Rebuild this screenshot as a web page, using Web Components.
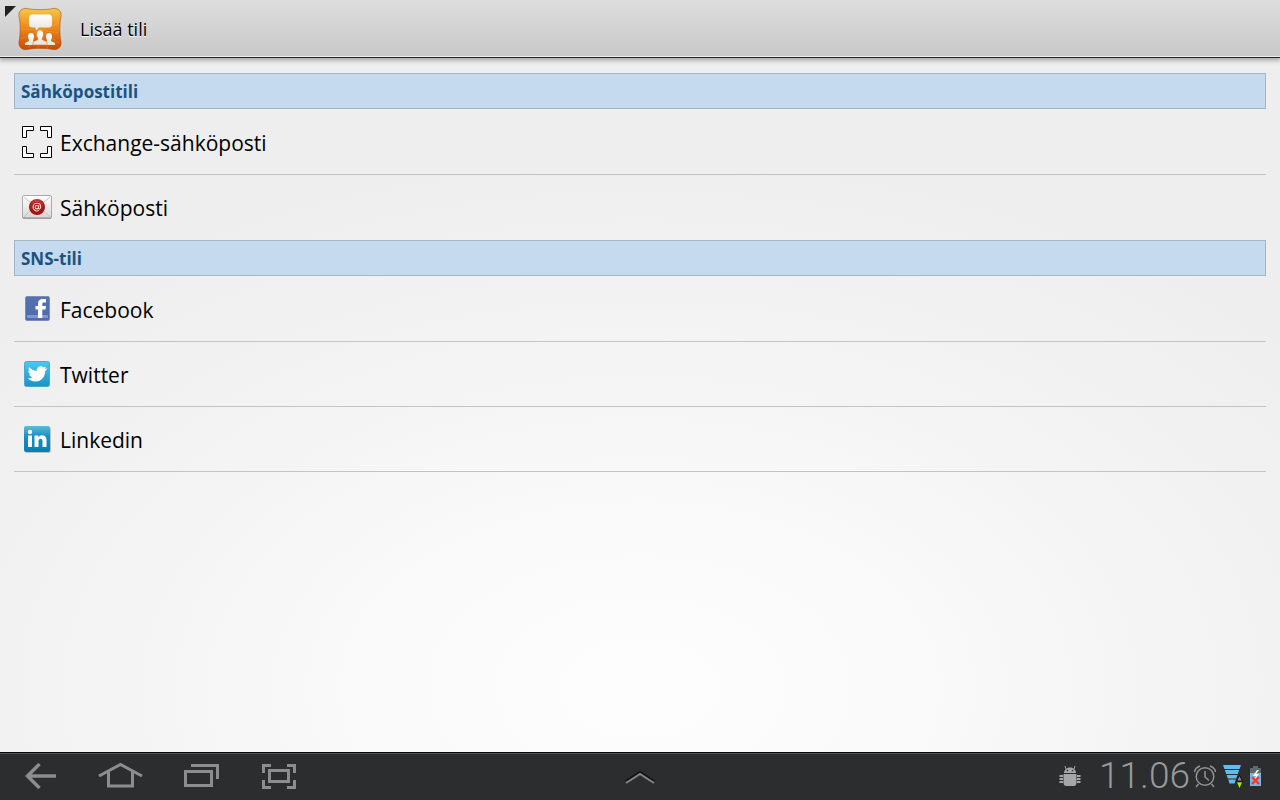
<!DOCTYPE html>
<html lang="fi">
<head>
<meta charset="utf-8">
<meta name="viewport" content="width=device-width, initial-scale=1">
<title>Lisää tili</title>
<style>
    body {
        margin: 0;
        font-family: "Open Sans", "Noto Sans", sans-serif;
        color: #000;
    }
</style>
</head>
<body>
<account-screen>
    <title-bar slot="top">Lisää tili</title-bar>
    <account-group heading="Sähköpostitili">
        <account-row icon="exchange">Exchange-sähköposti</account-row>
        <account-row icon="mail" last>Sähköposti</account-row>
    </account-group>
    <account-group heading="SNS-tili">
        <account-row icon="facebook">Facebook</account-row>
        <account-row icon="twitter">Twitter</account-row>
        <account-row icon="linkedin">Linkedin</account-row>
    </account-group>
    <system-bar slot="bottom" time="11.06"></system-bar>
</account-screen>

<script>
const ICONS = {
    exchange: `<svg width="32" height="34" viewBox="0 0 32 34" fill="#fff" stroke="#000">
        <path d="M1.5 1.5h11v4h-7v7h-4zM30.5 1.5h-11v4h7v7h4zM1.5 32.5h11v-4h-7v-7h-4zM30.5 32.5h-11v-4h7v-7h4z"/></svg>`,
    mail: `<svg width="32" height="26" viewBox="0 0 32 26">
        <defs>
            <linearGradient id="paper" x2="0" y2="1"><stop stop-color="#fff"/><stop offset="1" stop-color="#d6d6d6"/></linearGradient>
            <radialGradient id="seal" cy=".3"><stop stop-color="#dc4f45"/><stop offset="1" stop-color="#a31512"/></radialGradient>
        </defs>
        <rect x="1.5" y="1.5" width="29" height="23" rx="1.5" fill="url(#paper)" stroke="#aaa"/>
        <path d="M2 24h28" stroke="#8e8e8e"/>
        <path d="M3 3l13 11L29 3M3 23l9-9M29 23l-9-9" fill="none" stroke="#c4c4c4"/>
        <circle cx="16" cy="13" r="8" fill="url(#seal)"/>
        <circle cx="16" cy="13" r="5" fill="#9e1714"/>
        <g fill="none" stroke="#f5d8d2" stroke-width="1.1">
            <circle cx="15.8" cy="13.2" r="1.7"/>
            <path d="M17.9 11.3l-.5 3c0 1.2 2.3.9 2.3-1.6 0-2-1.6-3.5-3.7-3.5-2.3 0-4 1.8-4 4 0 3 3.5 4.7 6 3.2"/>
        </g></svg>`,
    facebook: `<svg width="32" height="32" viewBox="0 0 32 32">
        <defs><linearGradient id="fb" x2="0" y2="1"><stop stop-color="#5670b0"/><stop offset="1" stop-color="#4f6cb2"/></linearGradient></defs>
        <rect x="4.5" y="3.5" width="24" height="24" rx="1.5" fill="url(#fb)" stroke="#7b8dba"/>
        <path d="M6 22h21v3H6z" fill="#8296c9"/>
        <path d="M17 25v-8.500h-2.500V13H17v-2.500C17 7.500 18.800 6 21.500 6H25v3.500h-2.200c-1.100 0-1.500.5-1.500 1.500v2H25l-.5 3.500h-3.200V25z" fill="#fff"/></svg>`,
    twitter: `<svg width="32" height="32" viewBox="0 0 32 32">
        <defs><linearGradient id="tw" x2="0" y2="1"><stop stop-color="#4cc8ed"/><stop offset="1" stop-color="#1b92c6"/></linearGradient></defs>
        <rect x="3.500" y="3.500" width="25" height="25" rx="2" fill="url(#tw)" stroke="#4aa9ce"/>
        <path d="M6.500 20.300c2.200.3 3.800-.2 5-1.200-1.800-.2-3-1.200-3.300-2.600h1.600c-1.600-.8-2.500-2-2.500-3.800l1.600.4C7.500 11.800 7.300 10.300 8 9c2 2.300 4.500 3.700 7.600 4 0-3 1.700-4.800 4.100-4.800 1.300 0 2.300.5 3.100 1.400l2.300-.9-1.200 2 2.700-.3-2.400 2.500C24 18.800 20.400 23.400 14.400 23.400c-3.200 0-5.900-1.200-7.900-3.100z" fill="#fff"/></svg>`,
    linkedin: `<svg width="32" height="32" viewBox="0 0 32 32">
        <defs><linearGradient id="li" x2="0" y2="1"><stop stop-color="#62b9da"/><stop offset=".4" stop-color="#1491c5"/><stop offset="1" stop-color="#087fb5"/></linearGradient></defs>
        <rect x="4" y="4" width="26" height="26" rx="2" fill="#000" opacity=".2"/>
        <rect x="3" y="3" width="26" height="26" rx="2" fill="url(#li)"/>
        <g fill="#fff"><circle cx="9" cy="9" r="2.200"/><path d="M7 12.500h4V24H7zM13.500 12.500h3.800v1.700c.8-1.300 2-2 3.700-2 3 0 4.500 1.800 4.500 5V24h-4v-5.800c0-1.700-.6-2.500-1.900-2.500-1.400 0-2.100 1-2.100 2.700V24h-4z"/></g></svg>`
};

class AccountScreen extends HTMLElement {
    constructor() {
        super();
        this.attachShadow({ mode: 'open' }).innerHTML = `
            <style>
                :host {
                    display: flex;
                    flex-direction: column;
                    min-height: 100vh;
                    background: radial-gradient(ellipse 68% 68% at 50% 86%, #fdfdfd 0%, #fafafa 30%, #f4f4f4 60%, #eee 100%);
                }
                main {
                    flex: 1;
                    padding: 16px 14px;
                }
            </style>
            <slot name="top"></slot>
            <main><slot></slot></main>
            <slot name="bottom"></slot>
        `;
    }
}

class TitleBar extends HTMLElement {
    constructor() {
        super();
        this.attachShadow({ mode: 'open' }).innerHTML = `
            <style>
                :host { display: block; }
                header {
                    position: relative;
                    display: flex;
                    align-items: center;
                    gap: 16px;
                    height: 54px;
                    padding: 2px 16px 0;
                    background: linear-gradient(#dedede, #c9c9c9);
                    border-bottom: 1px solid #eee;
                    box-shadow: 0 1px #222, 0 2px 5px 1px rgba(0, 0, 0, .35);
                }
                .corner {
                    position: absolute;
                    left: 5px;
                    top: 6px;
                }
                h1 {
                    margin: 0;
                    font-size: 18px;
                    font-weight: 400;
                    line-height: 24px;
                    text-shadow: 0 1px #fff;
                }
                svg { display: block; flex: none; }
            </style>
            <header>
                <svg class="corner" width="11" height="11" aria-hidden="true"><path d="M0 0h11L0 11z" fill="#222"/></svg>
                <svg width="48" height="52" viewBox="0 0 48 52" aria-hidden="true">
                    <defs>
                        <linearGradient id="tile" x2="0" y2="1"><stop stop-color="#f3c84b"/><stop offset=".45" stop-color="#ee8b1d"/><stop offset="1" stop-color="#c64a08"/></linearGradient>
                        <linearGradient id="white" x2="0" y2="1"><stop stop-color="#fff"/><stop offset="1" stop-color="#e6e4df"/></linearGradient>
                    </defs>
                    <path d="M11 5.500c6 1.500 20 1.500 26 0 5-1 9 3 8 8-1.500 6-1.500 18 0 25 1 5-3 9-8 8-6-1.500-20-1.500-26 0-5 1-9-3-8-8 1.500-7 1.500-19 0-25-1-5 3-9 8-8z" fill="url(#tile)" stroke="#a8551c" stroke-opacity=".6"/>
                    <g stroke="#f9b23e" stroke-width=".6" opacity=".5">
                        <path d="M24 27L5 17M24 27L5 26M24 27L5 36M24 27L12 45M24 27L22 46M24 27L32 46M24 27L43 40M24 27L43 30M24 27L43 20"/>
                    </g>
                    <path d="M17 11.500h15c3 0 4 1 4 4v5c0 3-1 4-4 4H23l-2.500 3-1.500-3h-2c-3 0-4-1-4-4v-5c0-3 1-4 4-4z" fill="url(#white)"/>
                    <g fill="url(#white)">
                        <path d="M12 33.500c0-2 1-3.500 3-3.500s3 1.500 3 3.500-1 3-1 4.500l4 2v2H9v-2l4-2c0-1.500-1-2.500-1-4.500z"/>
                        <path d="M30 33.500c0-2 1-3.500 3-3.500s3 1.500 3 3.500-1 3-1 4.500l4 2v2H27v-2l4-2c0-1.500-1-2.500-1-4.500z"/>
                        <path d="M20.500 31.500c0-3 1.500-4.500 3.500-4.500s3.500 1.500 3.500 4.500c0 2-1.500 3.500-1.500 5l5 2.500v3H17v-3l5-2.500c0-1.500-1.500-3-1.500-5z" stroke="#d96b16" stroke-width=".5"/>
                    </g>
                </svg>
                <h1><slot></slot></h1>
            </header>
        `;
    }
}

class AccountGroup extends HTMLElement {
    connectedCallback() {
        this.attachShadow({ mode: 'open' }).innerHTML = `
            <style>
                :host { display: block; }
                h2 {
                    margin: 0 0 1px;
                    padding: 1px 6px 0;
                    border: 1px solid #a4b5c6;
                    background: #c5daee;
                    color: #1b537f;
                    font-size: 17px;
                    font-weight: 700;
                    line-height: 33px;
                }
            </style>
            <section>
                <h2>${this.getAttribute('heading')}</h2>
                <slot></slot>
            </section>
        `;
    }
}

class AccountRow extends HTMLElement {
    connectedCallback() {
        this.attachShadow({ mode: 'open' }).innerHTML = `
            <style>
                :host {
                    display: block;
                    border-bottom: 1px solid #c3c3c3;
                }
                :host([last]) { border-bottom-color: transparent; }
                button {
                    display: flex;
                    align-items: center;
                    gap: 7px;
                    width: 100%;
                    height: 64px;
                    padding: 0 7px;
                    border: 0;
                    background: none;
                    color: inherit;
                    font: inherit;
                    font-size: 21px;
                    line-height: 32px;
                    text-align: left;
                }
                svg { display: block; flex: none; }
                span { padding-top: 2px; }
            </style>
            <button type="button">${ICONS[this.getAttribute('icon')]}<span><slot></slot></span></button>
        `;
    }
}

class SystemBar extends HTMLElement {
    connectedCallback() {
        this.attachShadow({ mode: 'open' }).innerHTML = `
            <style>
                :host { display: block; }
                footer {
                    display: grid;
                    grid-template-columns: 1fr auto 1fr;
                    align-items: center;
                    height: 44px;
                    padding-bottom: 2px;
                    border-top: 1px solid #525354;
                    background: #2c2d2f;
                    box-shadow: 0 -1px #090909;
                }
                nav, .status { display: flex; align-items: center; }
                nav { gap: 32px; padding-left: 16px; }
                .status {
                    justify-content: flex-end;
                    padding-right: 19px;
                }
                button {
                    padding: 0;
                    border: 0;
                    background: none;
                }
                svg { display: block; flex: none; }
                time {
                    margin: 0 3px 0 18px;
                    color: #999a9b;
                    font-family: Roboto, "Liberation Sans", sans-serif;
                    font-size: 37px;
                    font-weight: 300;
                    line-height: 44px;
                }
                .alarm { margin-right: 2px; }
            </style>
            <footer>
                <nav>
                    <button type="button" aria-label="Takaisin"><svg width="48" height="36" viewBox="0 0 48 36" fill="none" stroke="#8c8d8e" stroke-width="3.500">
                        <path d="M23.500 6L11.500 18l12 12M12 18h28"/></svg></button>
                    <button type="button" aria-label="Koti"><svg width="48" height="36" viewBox="0 0 48 36" fill="none" stroke="#8c8d8e" stroke-width="3">
                        <path d="M3 18L24.500 6.500 46 18M12.500 14v14h24V14"/></svg></button>
                    <button type="button" aria-label="Viimeisimmät"><svg width="48" height="36" viewBox="0 0 48 36" fill="none" stroke="#8c8d8e" stroke-width="3">
                        <path d="M9.500 13.500h26v14h-26zM15 7.500h26.500V21"/></svg></button>
                    <button type="button" aria-label="Kuvakaappaus"><svg width="48" height="36" viewBox="0 0 48 36" fill="none" stroke="#8c8d8e" stroke-width="3">
                        <path d="M13.500 12.500h19v11h-19zM7.500 15V7.500h7.500M31 7.500h7.500V15M7.500 22v7.500h7.500M38.500 22v7.500H31"/></svg></button>
                </nav>
                <button type="button" aria-label="Avaa"><svg width="32" height="20" viewBox="0 0 32 20" fill="none">
                    <path d="M2 15l14-9 14 9" stroke="#111" stroke-width="2"/>
                    <path d="M2 17l14-9 14 9" stroke="#858687" stroke-width="2"/></svg></button>
                <div class="status">
                    <svg width="22" height="22" viewBox="0 0 22 22" fill="#a5a6a7">
                        <path d="M5 8c0-3 2.500-5.500 6-5.500S17 5 17 8z"/><path d="M7 4L6 1M15 4l1-3" stroke="#a5a6a7"/>
                        <circle cx="8.500" cy="5.500" r=".8" fill="#2c2d2f"/><circle cx="13.500" cy="5.500" r=".8" fill="#2c2d2f"/>
                        <path d="M4.500 9h13v9c0 1.500-1 3-2.500 3H7c-1.500 0-2.500-1.500-2.500-3z"/>
                        <path d="M.5 11H4M.5 14H4M.5 17H4M18 11h3.500M18 14h3.500M18 17h3.500" stroke="#a5a6a7" stroke-width="2"/></svg>
                    <time>${this.getAttribute('time')}</time>
                    <svg class="alarm" width="24" height="24" viewBox="0 0 24 24" fill="none" stroke="#929394" stroke-width="1.500">
                        <circle cx="12" cy="12.500" r="8.800"/><path d="M12 7v6l4 3.500M5.500 20L3 23M18.500 20l2.500 3M1.500 8C2 5 4 3 7 2M22.500 8C22 5 20 3 17 2"/></svg>
                    <svg width="24" height="26" viewBox="0 0 24 26" overflow="visible">
                        <path d="M4 2h18l-1.400 4H5.400zM5.800 7h14.400l-1.400 4H7.200zM7.600 12h10.800l-1.200 3.500H8.800zM9.200 16.500h7.600l-1.300 4h-5z" fill="#60bce9"/>
                        <path d="M20.500 12.500l3 5.500h-6z" fill="#8a8b8c" stroke="#111"/><path d="M17.500 19h6l-3 7z" fill="#a4f30e" stroke="#111" stroke-width=".6"/></svg>
                    <svg width="18" height="26" viewBox="0 0 18 26">
                        <path d="M10 3h5v2h3v5H7V5h3z" fill="#5c6a70"/><path d="M7 10h11v13H7z" fill="#64bfea"/>
                        <path d="M14 7l-4 6h3l-2 5 5-7h-3l3-4z" fill="#fff"/><path d="M9 14l7 7M16 14l-7 7" stroke="#ee3b2d" stroke-width="2.400"/></svg>
                </div>
            </footer>
        `;
    }
}

customElements.define('account-screen', AccountScreen);
customElements.define('title-bar', TitleBar);
customElements.define('account-group', AccountGroup);
customElements.define('account-row', AccountRow);
customElements.define('system-bar', SystemBar);
</script>
</body>
</html>
